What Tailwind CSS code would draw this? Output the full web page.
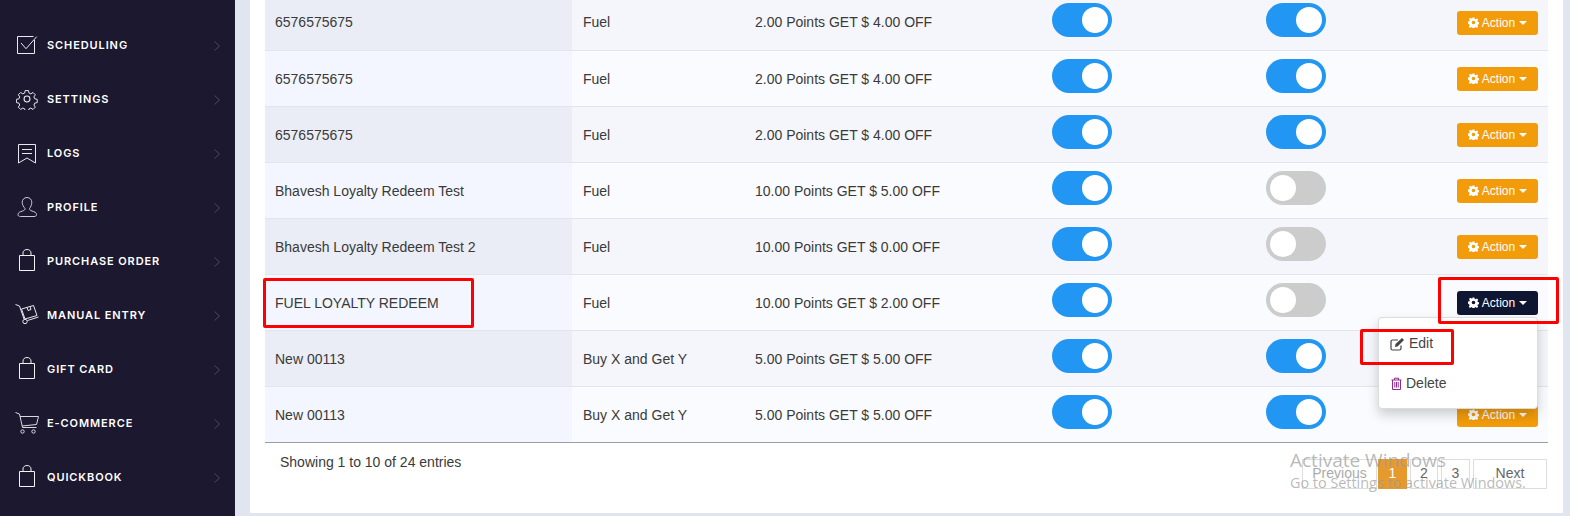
<!DOCTYPE html>
<html lang="en">
  <head>
    <meta charset="UTF-8" />
    <meta name="viewport" content="width=device-width, initial-scale=1.0" />
    <title>Loyalty Redeem</title>
    <script src="https://cdn.jsdelivr.net/npm/@tailwindcss/browser@4"></script>
  </head>
  <body class="bg-[#e1e5f0] font-['Liberation_Sans',Arial,sans-serif] overflow-hidden">
    <div class="relative flex w-[1570px] h-[516px] overflow-hidden">
      <!-- Sidebar -->
      <aside class="w-[235px] h-full shrink-0 bg-[#1c182f] pt-[18px] font-['Inter',sans-serif] text-[11px] font-semibold tracking-[0.9px] text-white">
        <a class="flex items-center h-[54px] pl-[47px] pr-[15px] relative">
          <svg class="absolute left-[16px] top-[16px]" width="22" height="22" viewBox="0 0 22 22" fill="none" stroke="#e8e8ee" stroke-width="1"><path d="M18.500 6v13.500h-17V2.500h16"/><path d="M5 9l5 5.700L20.700 2.700"/></svg>
          <span>SCHEDULING</span>
          <svg class="ml-auto mt-[2px]" width="6" height="10" viewBox="0 0 6 10" fill="none" stroke="#4d4a60"><path d="M.5.500l5 4.500-5 4.500"/></svg>
        </a>
        <a class="flex items-center h-[54px] pl-[47px] pr-[15px] relative">
          <svg class="absolute left-[16px] top-[16px]" width="22" height="22" viewBox="0 0 24 24" fill="none" stroke="#e8e8ee" stroke-width="1.200"><circle cx="12" cy="12" r="3.200"/><path d="M10 2h4l.6 3 2.300 1 2.600-1.700 2.800 2.800-1.700 2.600 1 2.300 3 .6v4l-3 .6-1 2.300 1.700 2.600-2.800 2.800-2.600-1.700-2.300 1-.6 3h-4l-.6-3-2.300-1-2.600 1.700-2.800-2.800 1.700-2.600-1-2.300-3-.6v-4l3-.6 1-2.300-1.700-2.600 2.800-2.800 2.600 1.700 2.300-1z" transform="translate(1 1) scale(.9)"/></svg>
          <span>SETTINGS</span>
          <svg class="ml-auto mt-[2px]" width="6" height="10" viewBox="0 0 6 10" fill="none" stroke="#4d4a60"><path d="M.5.500l5 4.500-5 4.500"/></svg>
        </a>
        <a class="flex items-center h-[54px] pl-[47px] pr-[15px] relative">
          <svg class="absolute left-[16px] top-[16px]" width="22" height="22" viewBox="0 0 22 22" fill="none" stroke="#e8e8ee" stroke-width="1"><path d="M2.500 2.500h17v18.500l-8.500-5-8.500 5z"/><path d="M6 7.500h10M6 11.500h10"/></svg>
          <span>LOGS</span>
          <svg class="ml-auto mt-[2px]" width="6" height="10" viewBox="0 0 6 10" fill="none" stroke="#4d4a60"><path d="M.5.500l5 4.500-5 4.500"/></svg>
        </a>
        <a class="flex items-center h-[54px] pl-[47px] pr-[15px] relative">
          <svg class="absolute left-[16px] top-[16px]" width="22" height="22" viewBox="0 0 22 22" fill="none" stroke="#c9c9d2" stroke-width="1"><path d="M11 1.500c3 0 4.800 2.200 4.800 5 0 2.500-1.300 4.700-2.300 6 0 1.300.5 1.800 2.500 2.500 2.600.9 4.500 1.500 4.500 3.500 0 1.500-1 2-2.500 2H4.500c-1.500 0-2.500-.5-2.500-2 0-2 1.900-2.600 4.500-3.500 2-.7 2.500-1.200 2.500-2.500-1-1.300-2.800-3.500-2.800-6 0-2.800 1.800-5 4.800-5z"/></svg>
          <span>PROFILE</span>
          <svg class="ml-auto mt-[2px]" width="6" height="10" viewBox="0 0 6 10" fill="none" stroke="#4d4a60"><path d="M.5.500l5 4.500-5 4.500"/></svg>
        </a>
        <a class="flex items-center h-[54px] pl-[47px] pr-[15px] relative">
          <svg class="absolute left-[16px] top-[14px]" width="22" height="24" viewBox="0 0 22 24" fill="none" stroke="#f2f2f5" stroke-width="1"><path d="M3.500 7.500h15v15h-15z"/><path d="M7 7.500V5c0-2.200 1.800-3.500 4-3.500s4 1.300 4 3.500v2.500"/></svg>
          <span>PURCHASE ORDER</span>
          <svg class="ml-auto mt-[2px]" width="6" height="10" viewBox="0 0 6 10" fill="none" stroke="#4d4a60"><path d="M.5.500l5 4.500-5 4.500"/></svg>
        </a>
        <a class="flex items-center h-[54px] pl-[47px] pr-[15px] relative">
          <svg class="absolute left-[14px] top-[15px]" width="26" height="22" viewBox="0 0 26 22" fill="none" stroke="#e8e8ee" stroke-width="1"><path d="M1.500 1.500l4 1.500 4.500 13"/><circle cx="11" cy="18.500" r="2.200"/><path d="M13.500 17.500l11-3.500"/><path d="M7.500 6l12-3.500 3.500 10-12 3.500z"/><path d="M13 4.500l1 3 3-1-1-3"/></svg>
          <span>MANUAL ENTRY</span>
          <svg class="ml-auto mt-[2px]" width="6" height="10" viewBox="0 0 6 10" fill="none" stroke="#4d4a60"><path d="M.5.500l5 4.500-5 4.500"/></svg>
        </a>
        <a class="flex items-center h-[54px] pl-[47px] pr-[15px] relative">
          <svg class="absolute left-[16px] top-[14px]" width="22" height="24" viewBox="0 0 22 24" fill="none" stroke="#f2f2f5" stroke-width="1"><path d="M3.500 7.500h15v15h-15z"/><path d="M7 7.500V5c0-2.200 1.800-3.500 4-3.500s4 1.300 4 3.500v2.500"/></svg>
          <span>GIFT CARD</span>
          <svg class="ml-auto mt-[2px]" width="6" height="10" viewBox="0 0 6 10" fill="none" stroke="#4d4a60"><path d="M.5.500l5 4.500-5 4.500"/></svg>
        </a>
        <a class="flex items-center h-[54px] pl-[47px] pr-[15px] relative">
          <svg class="absolute left-[14px] top-[15px]" width="26" height="24" viewBox="0 0 26 24" fill="none" stroke="#d8d8e0" stroke-width="1"><path d="M1.500 1.500l4 1.500 3 13.500h14"/><path d="M6 5.500h18.500l-2 8-14.500 1.500"/><circle cx="8.500" cy="20.500" r="1.700"/><circle cx="19.500" cy="20.500" r="1.700"/></svg>
          <span>E-COMMERCE</span>
          <svg class="ml-auto mt-[2px]" width="6" height="10" viewBox="0 0 6 10" fill="none" stroke="#4d4a60"><path d="M.5.500l5 4.500-5 4.500"/></svg>
        </a>
        <a class="flex items-center h-[54px] pl-[47px] pr-[15px] relative">
          <svg class="absolute left-[16px] top-[14px]" width="22" height="24" viewBox="0 0 22 24" fill="none" stroke="#f2f2f5" stroke-width="1"><path d="M3.500 7.500h15v15h-15z"/><path d="M7 7.500V5c0-2.200 1.800-3.500 4-3.500s4 1.300 4 3.500v2.500"/></svg>
          <span>QUICKBOOK</span>
          <svg class="ml-auto mt-[2px]" width="6" height="10" viewBox="0 0 6 10" fill="none" stroke="#4d4a60"><path d="M.5.500l5 4.500-5 4.500"/></svg>
        </a>
      </aside>

      <!-- Main card -->
      <main class="ml-[15px] w-[1313px] h-[513px] bg-white pl-[15px] pr-[15px]">
        <table class="table-fixed w-[1283px] -mt-[6px] border-collapse text-[14px] text-[#3a3a3a] border-b border-[#9a9da3]">
          <colgroup>
            <col class="w-[307px]" /><col class="w-[173px]" /><col class="w-[297px]" /><col class="w-[214px]" /><col class="w-[190px]" /><col class="w-[102px]" />
          </colgroup>
          <tbody>
            <tr class="h-[56px] bg-[#f5f6fb] border-b border-[#e3e5ee]">
              <td class="bg-[#eaedf6] px-[10px] pt-[2px]">6576575675</td><td class="pl-[11px] pt-[2px]">Fuel</td><td class="pl-[10px] pt-[2px]">2.00 Points GET $ 4.00 OFF</td>
              <td class="px-[10px]"><div class="flex justify-end w-[60px] h-[34px] mb-[4px] rounded-full bg-[#2196f3] p-[4px]"><div class="w-[26px] h-[26px] rounded-full bg-white"></div></div></td>
              <td class="px-[10px]"><div class="flex justify-end w-[60px] h-[34px] mb-[4px] rounded-full bg-[#2196f3] p-[4px]"><div class="w-[26px] h-[26px] rounded-full bg-white"></div></div></td>
              <td class="pr-[10px] pt-[2px] text-right"><button class="inline-flex items-center justify-center gap-[3px] w-[81px] h-[24px] rounded-[3px] bg-[#f39c0b] text-white text-[12px]"><svg class="-mt-[1px]" width="11" height="11" viewBox="0 0 24 24" fill="currentColor"><path fill-rule="evenodd" d="M10 1h4l.7 3.200 2 .8 2.800-1.800 2.800 2.800-1.800 2.800.8 2 3.200.7v4l-3.200.7-.8 2 1.800 2.800-2.800 2.800-2.800-1.800-2 .8-.7 3.200h-4l-.7-3.200-2-.8-2.800 1.800-2.800-2.800 1.800-2.800-.8-2L0 14v-4l3.200-.7.8-2-1.800-2.800 2.800-2.800 2.800 1.800 2-.8zM12 8a4 4 0 100 8 4 4 0 000-8z"/></svg>Action<svg class="ml-[1px]" width="8" height="4" viewBox="0 0 8 4" fill="currentColor"><path d="M0 0h8L4 4z"/></svg></button></td>
            </tr>
            <tr class="h-[56px] bg-[#fafbfe] border-b border-[#e3e5ee]">
              <td class="bg-[#f3f6fe] px-[10px] pt-[2px]">6576575675</td><td class="pl-[11px] pt-[2px]">Fuel</td><td class="pl-[10px] pt-[2px]">2.00 Points GET $ 4.00 OFF</td>
              <td class="px-[10px]"><div class="flex justify-end w-[60px] h-[34px] mb-[4px] rounded-full bg-[#2196f3] p-[4px]"><div class="w-[26px] h-[26px] rounded-full bg-white"></div></div></td>
              <td class="px-[10px]"><div class="flex justify-end w-[60px] h-[34px] mb-[4px] rounded-full bg-[#2196f3] p-[4px]"><div class="w-[26px] h-[26px] rounded-full bg-white"></div></div></td>
              <td class="pr-[10px] pt-[2px] text-right"><button class="inline-flex items-center justify-center gap-[3px] w-[81px] h-[24px] rounded-[3px] bg-[#f39c0b] text-white text-[12px]"><svg class="-mt-[1px]" width="11" height="11" viewBox="0 0 24 24" fill="currentColor"><path fill-rule="evenodd" d="M10 1h4l.7 3.200 2 .8 2.800-1.800 2.800 2.800-1.800 2.800.8 2 3.200.7v4l-3.200.7-.8 2 1.800 2.800-2.800 2.800-2.800-1.800-2 .8-.7 3.200h-4l-.7-3.200-2-.8-2.800 1.800-2.800-2.800 1.800-2.800-.8-2L0 14v-4l3.200-.7.8-2-1.800-2.800 2.800-2.800 2.800 1.800 2-.8zM12 8a4 4 0 100 8 4 4 0 000-8z"/></svg>Action<svg class="ml-[1px]" width="8" height="4" viewBox="0 0 8 4" fill="currentColor"><path d="M0 0h8L4 4z"/></svg></button></td>
            </tr>
            <tr class="h-[56px] bg-[#f5f6fb] border-b border-[#e3e5ee]">
              <td class="bg-[#eaedf6] px-[10px] pt-[2px]">6576575675</td><td class="pl-[11px] pt-[2px]">Fuel</td><td class="pl-[10px] pt-[2px]">2.00 Points GET $ 4.00 OFF</td>
              <td class="px-[10px]"><div class="flex justify-end w-[60px] h-[34px] mb-[4px] rounded-full bg-[#2196f3] p-[4px]"><div class="w-[26px] h-[26px] rounded-full bg-white"></div></div></td>
              <td class="px-[10px]"><div class="flex justify-end w-[60px] h-[34px] mb-[4px] rounded-full bg-[#2196f3] p-[4px]"><div class="w-[26px] h-[26px] rounded-full bg-white"></div></div></td>
              <td class="pr-[10px] pt-[2px] text-right"><button class="inline-flex items-center justify-center gap-[3px] w-[81px] h-[24px] rounded-[3px] bg-[#f39c0b] text-white text-[12px]"><svg class="-mt-[1px]" width="11" height="11" viewBox="0 0 24 24" fill="currentColor"><path fill-rule="evenodd" d="M10 1h4l.7 3.200 2 .8 2.800-1.800 2.800 2.800-1.800 2.800.8 2 3.200.7v4l-3.200.7-.8 2 1.800 2.800-2.800 2.800-2.800-1.800-2 .8-.7 3.200h-4l-.7-3.200-2-.8-2.800 1.800-2.800-2.800 1.800-2.800-.8-2L0 14v-4l3.200-.7.8-2-1.800-2.800 2.800-2.800 2.800 1.800 2-.8zM12 8a4 4 0 100 8 4 4 0 000-8z"/></svg>Action<svg class="ml-[1px]" width="8" height="4" viewBox="0 0 8 4" fill="currentColor"><path d="M0 0h8L4 4z"/></svg></button></td>
            </tr>
            <tr class="h-[56px] bg-[#fafbfe] border-b border-[#e3e5ee]">
              <td class="bg-[#f3f6fe] px-[10px] pt-[2px]">Bhavesh Loyalty Redeem Test</td><td class="pl-[11px] pt-[2px]">Fuel</td><td class="pl-[10px] pt-[2px]">10.00 Points GET $ 5.00 OFF</td>
              <td class="px-[10px]"><div class="flex justify-end w-[60px] h-[34px] mb-[4px] rounded-full bg-[#2196f3] p-[4px]"><div class="w-[26px] h-[26px] rounded-full bg-white"></div></div></td>
              <td class="px-[10px]"><div class="flex justify-start w-[60px] h-[34px] mb-[4px] rounded-full bg-[#cccccc] p-[4px]"><div class="w-[26px] h-[26px] rounded-full bg-white"></div></div></td>
              <td class="pr-[10px] pt-[2px] text-right"><button class="inline-flex items-center justify-center gap-[3px] w-[81px] h-[24px] rounded-[3px] bg-[#f39c0b] text-white text-[12px]"><svg class="-mt-[1px]" width="11" height="11" viewBox="0 0 24 24" fill="currentColor"><path fill-rule="evenodd" d="M10 1h4l.7 3.200 2 .8 2.800-1.800 2.800 2.800-1.800 2.800.8 2 3.200.7v4l-3.200.7-.8 2 1.800 2.800-2.800 2.800-2.800-1.800-2 .8-.7 3.200h-4l-.7-3.200-2-.8-2.800 1.800-2.800-2.800 1.800-2.800-.8-2L0 14v-4l3.200-.7.8-2-1.800-2.800 2.800-2.800 2.800 1.800 2-.8zM12 8a4 4 0 100 8 4 4 0 000-8z"/></svg>Action<svg class="ml-[1px]" width="8" height="4" viewBox="0 0 8 4" fill="currentColor"><path d="M0 0h8L4 4z"/></svg></button></td>
            </tr>
            <tr class="h-[56px] bg-[#f5f6fb] border-b border-[#e3e5ee]">
              <td class="bg-[#eaedf6] px-[10px] pt-[2px]">Bhavesh Loyalty Redeem Test 2</td><td class="pl-[11px] pt-[2px]">Fuel</td><td class="pl-[10px] pt-[2px]">10.00 Points GET $ 0.00 OFF</td>
              <td class="px-[10px]"><div class="flex justify-end w-[60px] h-[34px] mb-[4px] rounded-full bg-[#2196f3] p-[4px]"><div class="w-[26px] h-[26px] rounded-full bg-white"></div></div></td>
              <td class="px-[10px]"><div class="flex justify-start w-[60px] h-[34px] mb-[4px] rounded-full bg-[#cccccc] p-[4px]"><div class="w-[26px] h-[26px] rounded-full bg-white"></div></div></td>
              <td class="pr-[10px] pt-[2px] text-right"><button class="inline-flex items-center justify-center gap-[3px] w-[81px] h-[24px] rounded-[3px] bg-[#f39c0b] text-white text-[12px]"><svg class="-mt-[1px]" width="11" height="11" viewBox="0 0 24 24" fill="currentColor"><path fill-rule="evenodd" d="M10 1h4l.7 3.200 2 .8 2.800-1.800 2.800 2.800-1.800 2.800.8 2 3.200.7v4l-3.200.7-.8 2 1.800 2.800-2.800 2.800-2.800-1.800-2 .8-.7 3.200h-4l-.7-3.200-2-.8-2.800 1.800-2.800-2.800 1.800-2.800-.8-2L0 14v-4l3.200-.7.8-2-1.800-2.800 2.800-2.800 2.800 1.800 2-.8zM12 8a4 4 0 100 8 4 4 0 000-8z"/></svg>Action<svg class="ml-[1px]" width="8" height="4" viewBox="0 0 8 4" fill="currentColor"><path d="M0 0h8L4 4z"/></svg></button></td>
            </tr>
            <tr class="h-[56px] bg-[#fafbfe] border-b border-[#e3e5ee]">
              <td class="bg-[#f3f6fe] px-[10px] pt-[2px]">FUEL LOYALTY REDEEM</td><td class="pl-[11px] pt-[2px]">Fuel</td><td class="pl-[10px] pt-[2px]">10.00 Points GET $ 2.00 OFF</td>
              <td class="px-[10px]"><div class="flex justify-end w-[60px] h-[34px] mb-[4px] rounded-full bg-[#2196f3] p-[4px]"><div class="w-[26px] h-[26px] rounded-full bg-white"></div></div></td>
              <td class="px-[10px]"><div class="flex justify-start w-[60px] h-[34px] mb-[4px] rounded-full bg-[#cccccc] p-[4px]"><div class="w-[26px] h-[26px] rounded-full bg-white"></div></div></td>
              <td class="pr-[10px] pt-[2px] text-right"><button class="inline-flex items-center justify-center gap-[3px] w-[81px] h-[24px] rounded-[3px] bg-[#0f1631] text-white text-[12px]"><svg class="-mt-[1px]" width="11" height="11" viewBox="0 0 24 24" fill="currentColor"><path fill-rule="evenodd" d="M10 1h4l.7 3.200 2 .8 2.800-1.800 2.800 2.800-1.800 2.800.8 2 3.200.7v4l-3.200.7-.8 2 1.800 2.800-2.800 2.800-2.800-1.800-2 .8-.7 3.200h-4l-.7-3.200-2-.8-2.800 1.800-2.800-2.800 1.800-2.800-.8-2L0 14v-4l3.200-.7.8-2-1.800-2.800 2.800-2.800 2.800 1.800 2-.8zM12 8a4 4 0 100 8 4 4 0 000-8z"/></svg>Action<svg class="ml-[1px]" width="8" height="4" viewBox="0 0 8 4" fill="currentColor"><path d="M0 0h8L4 4z"/></svg></button></td>
            </tr>
            <tr class="h-[56px] bg-[#f5f6fb] border-b border-[#e3e5ee]">
              <td class="bg-[#eaedf6] px-[10px] pt-[2px]">New 00113</td><td class="pl-[11px] pt-[2px]">Buy X and Get Y</td><td class="pl-[10px] pt-[2px]">5.00 Points GET $ 5.00 OFF</td>
              <td class="px-[10px]"><div class="flex justify-end w-[60px] h-[34px] mb-[4px] rounded-full bg-[#2196f3] p-[4px]"><div class="w-[26px] h-[26px] rounded-full bg-white"></div></div></td>
              <td class="px-[10px]"><div class="flex justify-end w-[60px] h-[34px] mb-[4px] rounded-full bg-[#2196f3] p-[4px]"><div class="w-[26px] h-[26px] rounded-full bg-white"></div></div></td>
              <td class="pr-[10px] pt-[2px] text-right"><button class="inline-flex items-center justify-center gap-[3px] w-[81px] h-[24px] rounded-[3px] bg-[#f39c0b] text-white text-[12px]"><svg class="-mt-[1px]" width="11" height="11" viewBox="0 0 24 24" fill="currentColor"><path fill-rule="evenodd" d="M10 1h4l.7 3.200 2 .8 2.800-1.800 2.800 2.800-1.800 2.800.8 2 3.200.7v4l-3.200.7-.8 2 1.800 2.800-2.800 2.800-2.800-1.800-2 .8-.7 3.200h-4l-.7-3.200-2-.8-2.800 1.800-2.800-2.800 1.800-2.800-.8-2L0 14v-4l3.200-.7.8-2-1.800-2.800 2.800-2.800 2.800 1.800 2-.8zM12 8a4 4 0 100 8 4 4 0 000-8z"/></svg>Action<svg class="ml-[1px]" width="8" height="4" viewBox="0 0 8 4" fill="currentColor"><path d="M0 0h8L4 4z"/></svg></button></td>
            </tr>
            <tr class="h-[56px] bg-[#fafbfe]">
              <td class="bg-[#f3f6fe] px-[10px] pt-[2px]">New 00113</td><td class="pl-[11px] pt-[2px]">Buy X and Get Y</td><td class="pl-[10px] pt-[2px]">5.00 Points GET $ 5.00 OFF</td>
              <td class="px-[10px]"><div class="flex justify-end w-[60px] h-[34px] mb-[4px] rounded-full bg-[#2196f3] p-[4px]"><div class="w-[26px] h-[26px] rounded-full bg-white"></div></div></td>
              <td class="px-[10px]"><div class="flex justify-end w-[60px] h-[34px] mb-[4px] rounded-full bg-[#2196f3] p-[4px]"><div class="w-[26px] h-[26px] rounded-full bg-white"></div></div></td>
              <td class="pr-[10px] pt-[2px] text-right"><button class="inline-flex items-center justify-center gap-[3px] w-[81px] h-[24px] rounded-[3px] bg-[#f39c0b] text-white text-[12px]"><svg class="-mt-[1px]" width="11" height="11" viewBox="0 0 24 24" fill="currentColor"><path fill-rule="evenodd" d="M10 1h4l.7 3.200 2 .8 2.800-1.800 2.800 2.800-1.800 2.800.8 2 3.200.7v4l-3.200.7-.8 2 1.800 2.800-2.800 2.800-2.800-1.800-2 .8-.7 3.200h-4l-.7-3.200-2-.8-2.800 1.800-2.800-2.800 1.800-2.800-.8-2L0 14v-4l3.200-.7.8-2-1.800-2.800 2.800-2.800 2.800 1.800 2-.8zM12 8a4 4 0 100 8 4 4 0 000-8z"/></svg>Action<svg class="ml-[1px]" width="8" height="4" viewBox="0 0 8 4" fill="currentColor"><path d="M0 0h8L4 4z"/></svg></button></td>
            </tr>
          </tbody>
        </table>

        <!-- Table footer -->
        <div class="flex justify-between text-[14px] text-[#3a3a3a]">
          <div class="pl-[15px] pt-[9px]">Showing 1 to 10 of 24 entries</div>
          <div class="flex items-start gap-[3px] pt-[16px] pr-[1px] text-[14px] text-[#666666]">
            <span class="flex items-center justify-center w-[75px] h-[30px] border border-[#dddddd] text-[#aaaaaa]">Previous</span>
            <span class="flex items-center justify-center w-[29px] h-[30px] -ml-[2px] bg-[#e69a2e] text-white">1</span>
            <span class="flex items-center justify-center w-[28px] h-[30px] border border-[#dddddd]">2</span>
            <span class="flex items-center justify-center w-[29px] h-[30px] border border-[#dddddd]">3</span>
            <span class="flex items-center justify-center w-[74px] h-[30px] border border-[#dddddd]">Next</span>
          </div>
        </div>
      </main>

      <!-- Open dropdown -->
      <div class="absolute left-[1378px] top-[317px] w-[160px] h-[92px] rounded-[4px] bg-white border border-[#dcdcdc] shadow-[0_6px_12px_rgba(0,0,0,0.18)] text-[14px] text-[#444444]">
        <div class="flex items-center gap-[4px] pl-[11px] pt-[15px]">
          <svg width="15" height="14" viewBox="0 0 15 14" fill="none" stroke="#444444" stroke-width="1.200"><path d="M11 8.500v3a1.500 1.500 0 01-1.500 1.500h-7A1.500 1.500 0 011 11.500v-7A1.500 1.500 0 012.500 3H8"/><path d="M5.500 7l6.500-6 2 2-6.500 6.500-2.500.5z" fill="#444444" stroke="none"/></svg>
          <span>Edit</span>
        </div>
        <div class="flex items-center gap-[4px] pl-[12px] pt-[19px]">
          <svg width="11" height="13" viewBox="0 0 11 13" fill="none" stroke="#8e2a8b" stroke-width="1"><path d="M.5 3h10M3.500 3V1.200h4V3M1.500 3v9.500h8V3M3.800 5v5.500M5.500 5v5.500M7.200 5v5.500"/></svg>
          <span>Delete</span>
        </div>
      </div>

      <!-- Red annotation boxes -->
      <div class="absolute left-[263px] top-[278px] w-[211px] h-[50px] border-[3px] border-[#ff0000] rounded-[2px]"></div>
      <div class="absolute left-[1438px] top-[277px] w-[121px] h-[47px] border-[3px] border-[#ff0000] rounded-[2px]"></div>
      <div class="absolute left-[1360px] top-[329px] w-[94px] h-[36px] border-[3px] border-[#ff0000] rounded-[2px]"></div>

      <!-- Windows watermark -->
      <div class="absolute left-[1290px] top-[447px] font-['Open_Sans',sans-serif] text-[#9a9a9a]/70 pointer-events-none">
        <div class="text-[19px] leading-[26px]">Activate Windows</div>
        <div class="text-[14.400px] leading-[20px]">Go to Settings to activate Windows.</div>
      </div>
    </div>
  </body>
</html>
